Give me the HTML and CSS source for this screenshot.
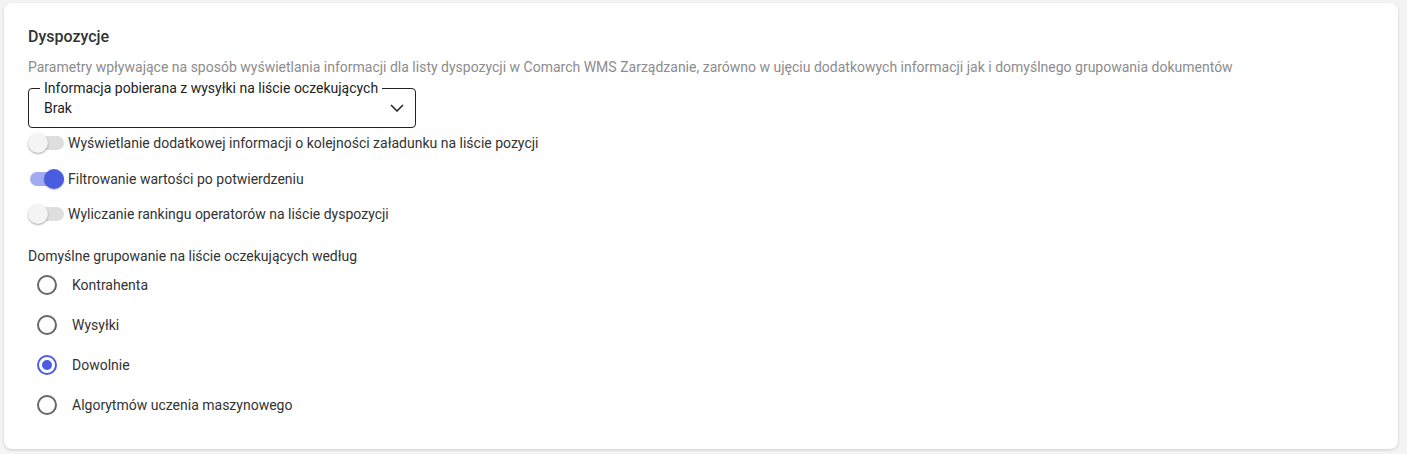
FILE: index.html
```html
<!DOCTYPE html>
<html lang="pl">
<head>
<meta charset="utf-8">
<title>Dyspozycje</title>
<link rel="stylesheet" href="styles.css">
</head>
<body>
<div class="card">
  <h2 class="title">Dyspozycje</h2>
  <p class="desc">Parametry wpływające na sposób wyświetlania informacji dla listy dyspozycji w Comarch WMS Zarządzanie, zarówno w ujęciu dodatkowych informacji jak i domyślnego grupowania dokumentów</p>
  <div class="select">
    <span class="select-label">Informacja pobierana z wysyłki na liście oczekujących</span>
    <span class="select-value">Brak</span>
    <svg class="chevron" width="14" height="8" viewBox="0 0 14 8"><path d="M1 1l6 6 6-6" fill="none" stroke="#222" stroke-width="1.5"/></svg>
  </div>
  <div class="toggles">
    <div class="toggle-row"><span class="switch"><span class="track"></span><span class="thumb"></span></span><span class="tlabel">Wyświetlanie dodatkowej informacji o kolejności załadunku na liście pozycji</span></div>
    <div class="toggle-row"><span class="switch on"><span class="track"></span><span class="thumb"></span></span><span class="tlabel">Filtrowanie wartości po potwierdzeniu</span></div>
    <div class="toggle-row"><span class="switch"><span class="track"></span><span class="thumb"></span></span><span class="tlabel">Wyliczanie rankingu operatorów na liście dyspozycji</span></div>
  </div>
  <div class="group-label">Domyślne grupowanie na liście oczekujących według</div>
  <div class="radios">
    <div class="radio-row"><span class="radio"></span><span class="rlabel">Kontrahenta</span></div>
    <div class="radio-row"><span class="radio"></span><span class="rlabel">Wysyłki</span></div>
    <div class="radio-row"><span class="radio checked"></span><span class="rlabel">Dowolnie</span></div>
    <div class="radio-row"><span class="radio"></span><span class="rlabel">Algorytmów uczenia maszynowego</span></div>
  </div>
</div>
</body>
</html>
```
FILE: styles.css
```css
html, body {
  margin: 0;
  padding: 0;
}
body {
  background: #f4f4f4;
  font-family: Roboto, "Liberation Sans", Arial, sans-serif;
  color: #333;
  padding: 3px 9px 5px 4px;
}
.card {
  background: #fff;
  border-radius: 8px;
  box-shadow: 0 1px 3px rgba(0, 0, 0, 0.16);
  padding: 22px 24px 24px 24px;
  height: 446px;
  box-sizing: border-box;
}
.title {
  margin: 0;
  font-size: 16px;
  line-height: 24px;
  font-weight: 500;
  color: #333;
}
.desc {
  margin: 8px 0 0 0;
  font-size: 14px;
  line-height: 20px;
  color: #8c8c8c;
}
.select {
  position: relative;
  margin-top: 11px;
  width: 388px;
  height: 40px;
  box-sizing: border-box;
  border: 1px solid #222;
  border-radius: 4px;
  display: flex;
  align-items: center;
  justify-content: space-between;
  padding: 0 11px 0 15px;
}
.select-label {
  position: absolute;
  top: -10px;
  left: 11px;
  background: #fff;
  padding: 0 4px;
  font-size: 14px;
  line-height: 18px;
  color: #222;
}
.select-value {
  font-size: 14px;
  color: #222;
}
.toggles {
  margin-top: 5px;
  display: flex;
  flex-direction: column;
  gap: 15.5px;
}
.toggle-row {
  display: flex;
  align-items: center;
  height: 20px;
  gap: 4px;
}
.switch {
  position: relative;
  width: 36px;
  height: 20px;
  flex: none;
}
.track {
  position: absolute;
  left: 2px;
  right: 0;
  top: 3px;
  height: 14px;
  border-radius: 7px;
  background: #dedede;
}
.thumb {
  position: absolute;
  left: 0;
  top: 0;
  width: 20px;
  height: 20px;
  border-radius: 50%;
  background: #f4f4f4;
  box-shadow: 0 1px 2px rgba(0, 0, 0, 0.35);
}
.switch.on .track {
  background: #a2aaf0;
}
.switch.on .thumb {
  left: 16px;
  background: #4a5de0;
  box-shadow: 0 1px 2px rgba(0, 0, 0, 0.25);
}
.tlabel {
  font-size: 14px;
  line-height: 20px;
  color: #333;
}
.group-label {
  margin-top: 22px;
  font-size: 14px;
  line-height: 20px;
  color: #333;
}
.radios {
  display: flex;
  flex-direction: column;
  margin-top: -1px;
}
.radio-row {
  display: flex;
  align-items: center;
  height: 40px;
  padding-left: 9px;
  gap: 15px;
}
.radio {
  width: 20px;
  height: 20px;
  box-sizing: border-box;
  border: 2px solid #666;
  border-radius: 50%;
  flex: none;
  display: flex;
  align-items: center;
  justify-content: center;
}
.radio.checked {
  border-color: #4a5de0;
}
.radio.checked::after {
  content: "";
  width: 10px;
  height: 10px;
  border-radius: 50%;
  background: #4a5de0;
}
.rlabel {
  font-size: 14px;
  line-height: 20px;
  color: #333;
}
```
